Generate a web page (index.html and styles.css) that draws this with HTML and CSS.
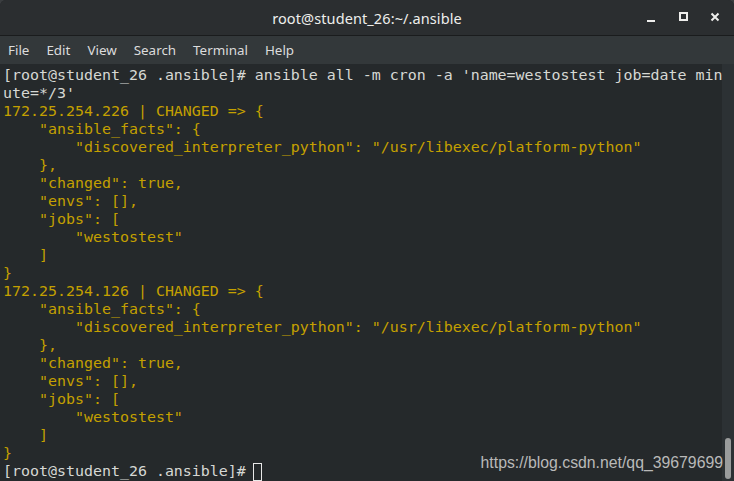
FILE: index.html
```html
<!DOCTYPE html>
<html>
<head>
<meta charset="UTF-8">
<title>root@student_26:~/.ansible</title>
<link rel="stylesheet" href="styles.css">
</head>
<body>
<div class="window">
    <div class="titlebar">
        <div class="title">root@student_26:~/.ansible</div>
        <div class="buttons">
            <svg width="14" height="14" viewBox="0 0 14 14"><rect x="3" y="10" width="8" height="2" fill="#eeeeec"/></svg>
            <svg width="14" height="14" viewBox="0 0 14 14"><rect x="4" y="3" width="7" height="7" fill="none" stroke="#eeeeec" stroke-width="2"/></svg>
            <svg width="14" height="14" viewBox="0 0 14 14"><path d="M3.5 3.5L10.5 10.5M10.5 3.5L3.5 10.5" stroke="#eeeeec" stroke-width="2"/></svg>
        </div>
    </div>
    <div class="menubar">
        <span>File</span><span>Edit</span><span>View</span><span>Search</span><span>Terminal</span><span>Help</span>
    </div>
    <div class="body">
<pre class="screen">[root@student_26 .ansible]# ansible all -m cron -a 'name=westostest job=date min
ute=*/3'
<span class="y">172.25.254.226 | CHANGED =&gt; {
    "ansible_facts": {
        "discovered_interpreter_python": "/usr/libexec/platform-python"
    },
    "changed": true,
    "envs": [],
    "jobs": [
        "westostest"
    ]
}
172.25.254.126 | CHANGED =&gt; {
    "ansible_facts": {
        "discovered_interpreter_python": "/usr/libexec/platform-python"
    },
    "changed": true,
    "envs": [],
    "jobs": [
        "westostest"
    ]
}</span>
[root@student_26 .ansible]#<span class="cursor"></span></pre>
        <div class="scrollbar"><div class="thumb"></div></div>
        <div class="watermark">https://blog.csdn.net/qq_39679699</div>
    </div>
</div>
</body>
</html>
```
FILE: styles.css
```css
html,body{margin:0;padding:0;background:#3a3d3f;}
body{width:734px;height:481px;overflow:hidden;}

.window{display:flex;flex-direction:column;height:481px;background:#25292b;border-radius:6px 6px 0 0;overflow:hidden;}

.titlebar{position:relative;height:35px;flex:none;background:#2b2e30;border-bottom:1px solid #1a1c1d;display:flex;align-items:center;justify-content:center;}
.title{font-family:"Noto Sans",sans-serif;font-size:14.5px;color:#eeeeec;letter-spacing:0.1px;}
.buttons{position:absolute;right:12px;top:10px;display:flex;gap:18px;}
.buttons svg{display:block;}

.menubar{height:28px;flex:none;background:#33383a;display:flex;align-items:center;padding-left:8px;font-family:"Noto Sans",sans-serif;font-size:13.4px;color:#dcdcdc;}
.menubar span{margin-right:17px;}

.body{position:relative;flex:1;display:flex;min-height:0;}
.screen{flex:1;margin:0;padding:2px 0 0 3px;font-family:"DejaVu Sans Mono",monospace;font-size:14.95px;line-height:18px;color:#d6d8d4;white-space:pre;overflow:hidden;}
.y{color:#c4a000;}
.cursor{display:inline-block;width:7px;height:16px;margin-left:7px;border:1px solid #e8e8e8;vertical-align:-5px;}

.scrollbar{width:12px;flex:none;background:#2c3134;position:relative;}
.thumb{position:absolute;left:3px;bottom:2px;width:6px;height:41px;border-radius:3px;background:#9a9c9c;}

.watermark{position:absolute;right:11px;bottom:9px;font-family:"Liberation Sans",Arial,sans-serif;font-size:15.8px;color:#b9b9b9;}
```
